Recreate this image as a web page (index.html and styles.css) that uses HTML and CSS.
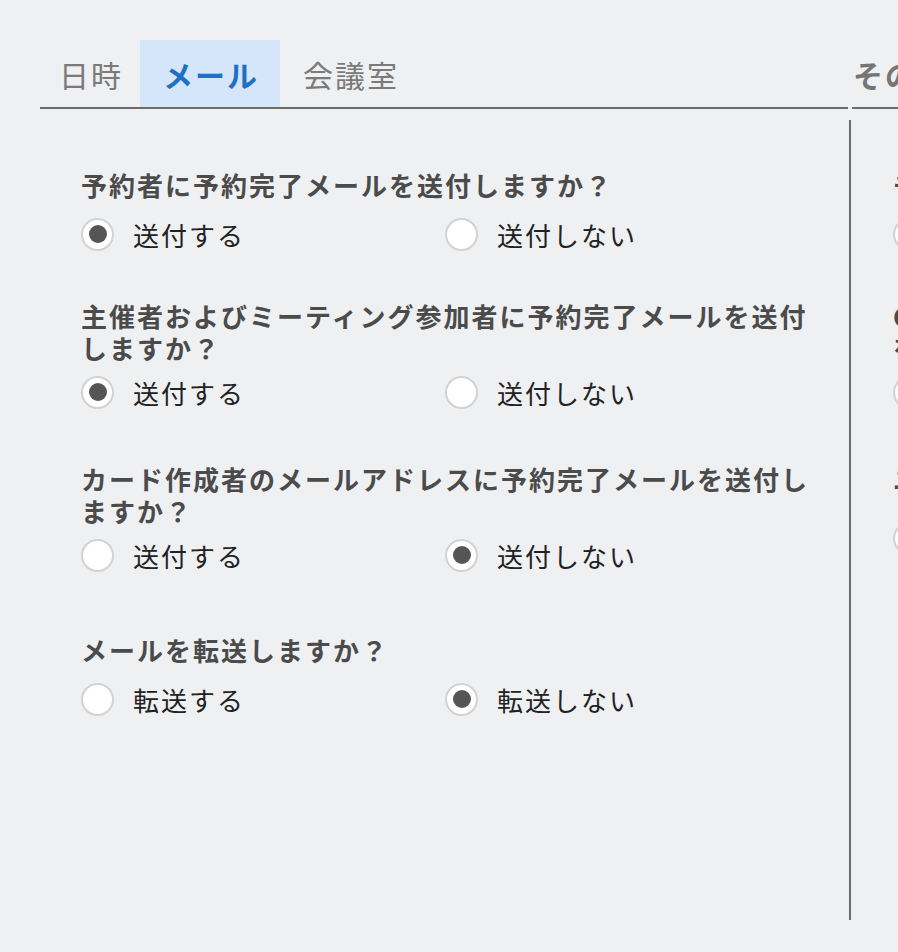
FILE: index.html
```html
<!DOCTYPE html>
<html lang="ja">
<head>
<meta charset="utf-8">
<title>設定</title>
<link rel="stylesheet" href="styles.css">
</head>
<body>
<div class="page">
  <section class="panel">
    <nav class="tabs">
      <div class="tab tab--first">日時</div>
      <div class="tab tab--active">メール</div>
      <div class="tab">会議室</div>
    </nav>
    <div class="panel-body">
      <div class="block">
        <div class="question">予約者に予約完了メールを送付しますか？</div>
        <div class="options options--single">
          <label class="option"><span class="radio radio--checked"></span>送付する</label>
          <label class="option"><span class="radio"></span>送付しない</label>
        </div>
      </div>
      <div class="block block--b">
        <div class="question">主催者およびミーティング参加者に予約完了メールを送付しますか？</div>
        <div class="options">
          <label class="option"><span class="radio radio--checked"></span>送付する</label>
          <label class="option"><span class="radio"></span>送付しない</label>
        </div>
      </div>
      <div class="block block--c">
        <div class="question">カード作成者のメールアドレスに予約完了メールを送付しますか？</div>
        <div class="options">
          <label class="option"><span class="radio"></span>送付する</label>
          <label class="option"><span class="radio radio--checked"></span>送付しない</label>
        </div>
      </div>
      <div class="block block--d">
        <div class="question">メールを転送しますか？</div>
        <div class="options options--single">
          <label class="option"><span class="radio"></span>転送する</label>
          <label class="option"><span class="radio radio--checked"></span>転送しない</label>
        </div>
      </div>
    </div>
  </section>
  <div class="divider"></div>
  <section class="panel panel--side">
    <nav class="tabs">
      <div class="title">その他</div>
    </nav>
    <div class="panel-body">
      <div class="block">
        <div class="question">チェックイン通知を送付しますか？</div>
        <div class="options options--single">
          <label class="option"><span class="radio"></span>送付する</label>
          <label class="option"><span class="radio"></span>送付しない</label>
        </div>
      </div>
      <div class="block block--b">
        <div class="question">Outlookの予定表に予約を反映しますか？カレンダー連携を使用する</div>
        <div class="options">
          <label class="option"><span class="radio"></span>反映する</label>
          <label class="option"><span class="radio"></span>反映しない</label>
        </div>
      </div>
      <div class="block block--c">
        <div class="question">ユーザーに通知しますか？</div>
        <div class="options options--wide">
          <label class="option"><span class="radio"></span>通知する</label>
          <label class="option"><span class="radio"></span>通知しない</label>
        </div>
      </div>
    </div>
  </section>
</div>
</body>
</html>
```

FILE: styles.css
```css
html, body {
  margin: 0;
  padding: 0;
  background: #eff0f2;
  overflow: hidden;
  font-family: "Noto Sans CJK JP", "Noto Sans", sans-serif;
}

.page {
  display: flex;
  align-items: flex-start;
  gap: 1px;
  padding: 40px 0 0 40px;
  width: max-content;
}

.panel {
  width: 808px;
  flex: none;
}

.tabs {
  display: flex;
  height: 67px;
  border-bottom: 2px solid #6c6c6c;
}

.tab {
  display: flex;
  align-items: center;
  padding: 0 21px 0 23px;
  font-size: 30px;
  letter-spacing: 2px;
  color: #7a7a7a;
}

.tab--first {
  padding: 0 17px 0 19px;
}

.tab--active {
  background: #d5e6fa;
  color: #1f6fc5;
  font-weight: 700;
}

.title {
  display: flex;
  align-items: center;
  padding-left: 1px;
  font-size: 30px;
  font-weight: 700;
  letter-spacing: 2px;
  color: #767676;
}

.divider {
  flex: none;
  width: 2px;
  height: 800px;
  margin-top: 80px;
  background: #6c6c6c;
}

.panel-body {
  padding: 60px 27px 0 41px;
}

.question {
  font-size: 26px;
  line-height: 32px;
  font-weight: 700;
  letter-spacing: 2px;
  color: #4b4b4b;
}

.options {
  display: grid;
  grid-template-columns: 364px 364px;
  align-items: center;
  height: 46px;
  margin-top: 5px;
}

.options--single {
  margin-top: 10px;
}

.options--wide {
  margin-top: 20px;
}

.option {
  display: flex;
  align-items: center;
  gap: 19px;
  font-size: 26px;
  letter-spacing: 2px;
  color: #222;
}

.radio {
  flex: none;
  display: flex;
  align-items: center;
  justify-content: center;
  width: 33px;
  height: 33px;
  box-sizing: border-box;
  border: 2px solid #d2d2d2;
  border-radius: 50%;
  background: #fff;
}

.radio--checked::after {
  content: "";
  width: 18px;
  height: 18px;
  border-radius: 50%;
  background: #555;
}

.block--b {
  margin-top: 43px;
}

.block--c {
  margin-top: 48px;
}

.block--d {
  margin-top: 56px;
}
```
